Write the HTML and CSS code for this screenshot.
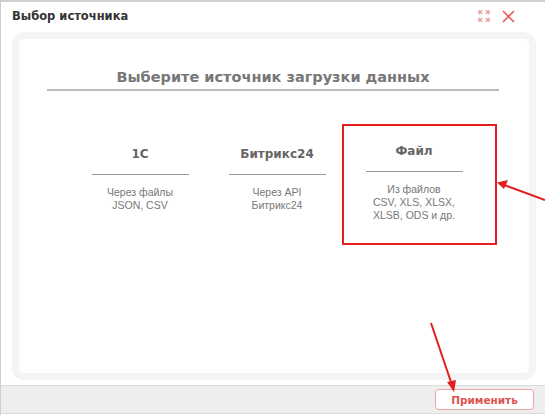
FILE: index.html
```html
<!DOCTYPE html>
<html lang="ru">
<head>
    <meta charset="UTF-8">
    <title>Выбор источника</title>
    <link rel="stylesheet" href="styles.css">
</head>
<body>
    <div class="window">
        <!-- Title bar -->
        <div class="titlebar">
            <span class="title">Выбор источника</span>
            <div class="tools">
                <svg class="icon-expand" width="12" height="12" viewBox="0 0 12 12">
                    <path d="M1 4.5V1h3.5M1 1l3 3M7.5 1H11v3.5M11 1L8 4M1 7.5V11h3.5M1 11l3-3M11 7.5V11H7.5M11 11L8 8" fill="none" stroke="#ef8a8a" stroke-width="1.1"/>
                </svg>
                <svg class="icon-close" width="13" height="13" viewBox="0 0 13 13">
                    <path d="M1 1l11 11M12 1L1 12" fill="none" stroke="#e8615b" stroke-width="1.6"/>
                </svg>
            </div>
        </div>

        <!-- Content -->
        <div class="content">
            <div class="panel">
                <h2 class="heading">Выберите источник загрузки данных</h2>
                <div class="sources">
                    <div class="source">
                        <div class="source-title">1С</div>
                        <div class="source-desc">Через файлы<br>JSON, CSV</div>
                    </div>
                    <div class="source">
                        <div class="source-title">Битрикс24</div>
                        <div class="source-desc">Через API<br>Битрикс24</div>
                    </div>
                    <div class="source selected">
                        <div class="source-title">Файл</div>
                        <div class="source-desc">Из файлов<br>CSV, XLS, XLSX,<br>XLSB, ODS и др.</div>
                    </div>
                </div>
            </div>
        </div>

        <!-- Footer -->
        <div class="footer">
            <button class="apply">Применить</button>
        </div>

        <!-- Annotations -->
        <div class="mark-box"></div>
        <svg class="arrows" width="545" height="415" viewBox="0 0 545 415">
            <path d="M545 200L499 183" stroke="#e41e1e" stroke-width="2" fill="none"/>
            <path d="M497 182.5l11-2.5-4 9z" fill="#e41e1e"/>
            <path d="M431 323L452 385" stroke="#e41e1e" stroke-width="2" fill="none"/>
            <path d="M454 392l-7-10 9-2z" fill="#e41e1e"/>
        </svg>
    </div>
</body>
</html>
```

FILE: styles.css
```css
body {
    margin: 0;
    font-family: "DejaVu Sans", Verdana, sans-serif;
    background: #fff;
}
.window {
    position: relative;
    width: 545px;
    height: 415px;
    box-sizing: border-box;
    border-top: 2px solid #cfcfcf;
    border-left: 1px solid #cfcfcf;
    display: flex;
    flex-direction: column;
    overflow: hidden;
}
.titlebar {
    height: 28px;
    padding: 0 30px 0 11px;
    display: flex;
    justify-content: space-between;
    align-items: center;
}
.title {
    font-size: 11.5px;
    font-weight: bold;
    color: #333;
}
.tools {
    display: flex;
    align-items: center;
    gap: 12px;
}
.content {
    flex: 1;
    padding: 2px 9px 5px 11px;
}
.panel {
    height: 100%;
    box-sizing: border-box;
    border: 7px solid #f4f4f4;
    border-radius: 12px;
    background: #fff;
    padding: 30px 30px 0 28px;
}
.heading {
    margin: 0;
    padding-bottom: 4px;
    border-bottom: 2px solid #bdbdbd;
    text-align: center;
    font-size: 14.5px;
    font-weight: bold;
    color: #777;
}
.sources {
    display: flex;
    justify-content: center;
    padding-top: 55px;
    padding-left: 8px;
}
.source {
    width: 97px;
    margin: 0 20px;
    text-align: center;
}
.source.selected {
    margin-top: -3px;
}
.source-title {
    font-size: 12px;
    font-weight: bold;
    color: #666;
    line-height: 16px;
    padding-bottom: 12px;
    border-bottom: 1px solid #999;
}
.source-desc {
    margin-top: 11px;
    font-family: "Liberation Sans", Arial, sans-serif;
    font-size: 10.5px;
    line-height: 13px;
    color: #777;
}
.footer {
    height: 27px;
    background: #eeeeee;
    border-top: 1px solid #dcdcdc;
    border-bottom: 1px solid #dcdcdc;
    display: flex;
    justify-content: flex-end;
    align-items: center;
    padding-right: 11px;
    margin-bottom: 1px;
}
.apply {
    width: 99px;
    height: 21px;
    background: #fff;
    border: 1px solid #eca5a5;
    border-radius: 4px;
    font-family: "DejaVu Sans", Verdana, sans-serif;
    font-size: 10.5px;
    font-weight: bold;
    color: #e0534e;
    cursor: pointer;
}
.mark-box {
    position: absolute;
    left: 341px;
    top: 122px;
    width: 151px;
    height: 117px;
    border: 2px solid #e41e1e;
}
.arrows {
    position: absolute;
    left: -1px;
    top: -2px;
    pointer-events: none;
}
```
